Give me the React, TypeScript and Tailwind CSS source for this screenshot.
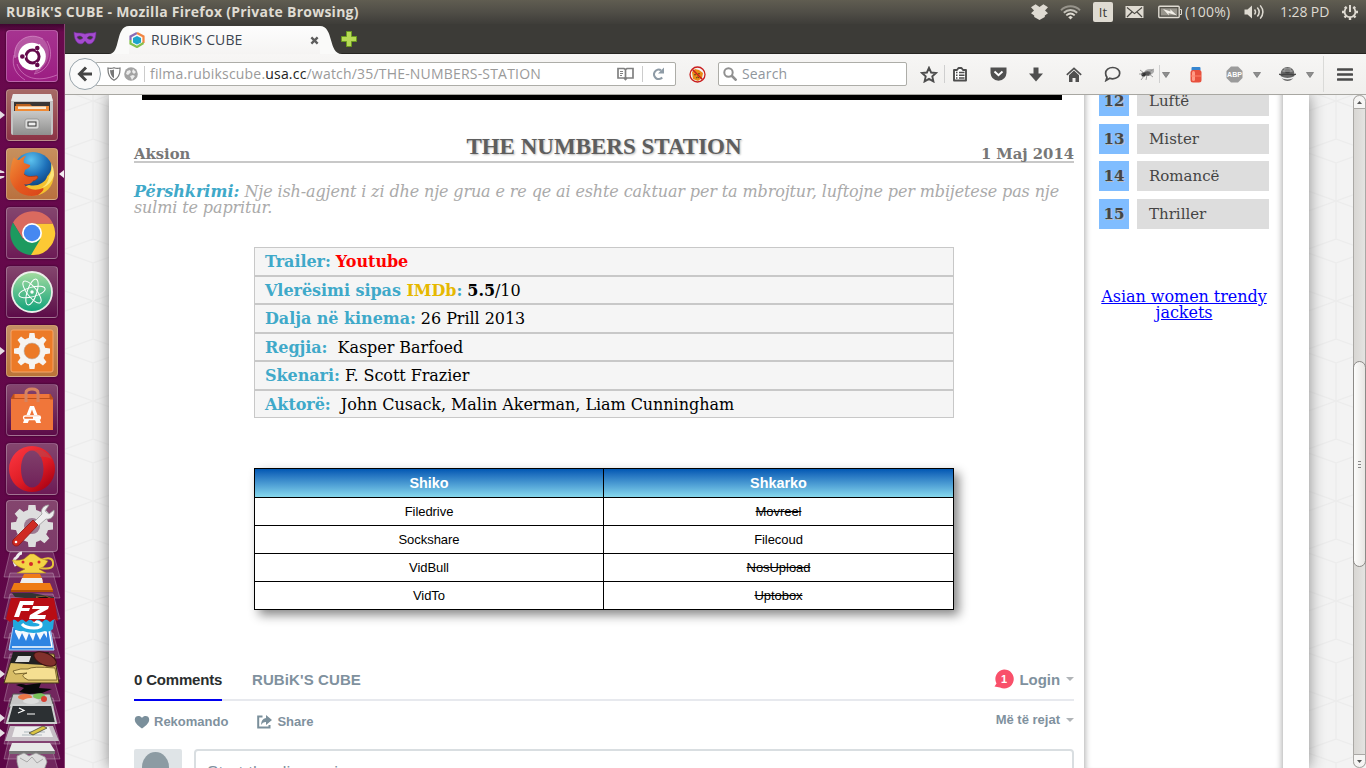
import React from 'react';
import type { ReactNode } from 'react';

const UI = "font-['Open_Sans','Noto_Sans',sans-serif]";

function Slot({ className, children }: { className: string; children: ReactNode }) {
  return <div className={`flex shrink-0 items-center justify-center ${className}`}>{children}</div>;
}

function Caret() {
  return (
    <svg width="8" height="6" viewBox="0 0 8 6">
      <path d="M0.5 0.5h7L4 5.5z" fill="#8f8f8f" stroke="#6f6f6f" strokeWidth="0.7" />
    </svg>
  );
}

/* ---------- Top panel ---------- */

function TopPanel() {
  return (
    <header className={`flex h-6 shrink-0 items-center bg-linear-to-b from-[#605d51] via-[#504e47] to-[#3e3d39] pl-[6px] text-[#dfdbd2] ${UI}`}>
      <span className="w-[400px] text-[14px] leading-6 font-bold whitespace-nowrap tracking-[0.25px]">RUBiK'S CUBE - Mozilla Firefox (Private Browsing)</span>
      <div className="ml-auto flex h-6 items-center">
        <Slot className="w-[20px]">
          <svg width="19" height="18" viewBox="0 0 19 18" fill="#dfdbd2">
            <path d="M5.6 1.2 9.5 4 13.4 1.2 18 4.3 15 7.4 18 10.2 14.8 12.4V14L9.500 17 4.2 14v-1.6L1 10.2 4 7.4 1 4.3z" />
          </svg>
        </Slot>
        <Slot className="ml-[11px] w-[21px]">
          <svg width="21" height="16" viewBox="0 0 21 16" fill="none" strokeWidth="1.9">
            <path d="M1 6.2C6.5 1 14.5 1 20 6.2" stroke="#97948b" />
            <path d="M3.8 8.8c4-3.8 9.4-3.8 13.4 0" stroke="#c4c1b8" />
            <path d="M6.3 11.4c2.6-2.3 5.8-2.3 8.4 0" stroke="#dfdbd2" />
            <path d="M8.2 13.2 10.5 11.8 12.8 13.2 10.5 15.6z" fill="#dfdbd2" stroke="none" />
          </svg>
        </Slot>
        <span className="ml-[12px] flex h-5 w-5 items-center justify-center rounded-[2px] bg-[#dfdbd2] text-[13px] leading-5 text-[#3c3b37]">It</span>
        <Slot className="ml-[12px] w-[19px]">
          <svg width="19" height="14" viewBox="0 0 19 14">
            <rect x="0.5" y="1" width="18" height="12" fill="#dfdbd2" />
            <path d="M2 2.5 9.5 8.6 17 2.5M2 12l5-5M17 12l-5-5" fill="none" stroke="#4a4842" strokeWidth="1.2" />
          </svg>
        </Slot>
        <Slot className="ml-[14px] w-[24px]">
          <svg width="24" height="14" viewBox="0 0 24 14">
            <rect x="0.8" y="1.3" width="20.4" height="11.2" rx="1" fill="none" stroke="#dfdbd2" strokeWidth="1.4" />
            <rect x="2.8" y="3.3" width="16.4" height="7.2" fill="#98958c" />
            <path d="M22 4.5h1.5v5H22" fill="none" stroke="#dfdbd2" />
            <path d="M5 4l7.5 2.5-.3-2.3L19 10.4 10.5 8l.5 2.4z" fill="#f2efe8" />
          </svg>
        </Slot>
        <span className="ml-[3px] w-[48px] text-[14px] leading-6 whitespace-nowrap tracking-[0.25px]">(100%)</span>
        <Slot className="ml-[11px] w-[21px]">
          <svg width="21" height="16" viewBox="0 0 21 16">
            <path d="M0.5 5.500h3l4.500-4v13l-4.500-4h-3z" fill="#dfdbd2" />
            <path d="M10.500 5.600q2 2.400 0 4.800M13.300 3.400q3.800 4.600 0 9.200M16.200 1.400q5.400 6.600 0 13.200" fill="none" stroke="#dfdbd2" strokeWidth="1.5" />
          </svg>
        </Slot>
        <span className="ml-[15px] w-[52px] text-[14px] leading-6 whitespace-nowrap tracking-[-0.1px]">1:28 PD</span>
        <Slot className="mr-[7px] ml-[9px] w-[18px]">
          <svg width="18" height="18" viewBox="0 0 18 18" fill="none" stroke="#dfdbd2">
            <path d="M6 4.300a5.400 5.400 0 1 0 6 0" strokeWidth="1.8" />
            <path d="M9 2v7" strokeWidth="2" />
            <path d="M3.800 3.800 5 5M14.200 3.800 13 5M1 9h2.600M14.400 9H17M3.500 14.500l1.600-1.600M14.500 14.500l-1.600-1.600M9 14.300V17" strokeWidth="2.4" />
          </svg>
        </Slot>
      </div>
    </header>
  );
}

/* ---------- Launcher ---------- */

function Tile({ tint, running, active, children }: { tint: string; running?: boolean; active?: boolean; children: ReactNode }) {
  return (
    <div className="flex h-[52px] w-[64px] shrink-0 items-center">
      <div className="flex w-[6px] flex-col items-start gap-[2px]">
        {running && !active && (
          <svg width="5" height="8" viewBox="0 0 5 8"><path d="M0 0 5 4 0 8z" fill="#e5dde3" /></svg>
        )}
        {active && (
          <svg width="5" height="9" viewBox="0 0 5 9"><path d="M0 0 4 1.500 4.500 3H0zM0 6h4.500L4 7.500 0 9z" fill="#e5dde3" /></svg>
        )}
      </div>
      <div className={`flex h-[52px] w-[52px] items-center justify-center rounded-[4px] border border-white/25 shadow-[0_0_2px_#2a0320] ${tint}`}>{children}</div>
      <div className="flex grow justify-end">
        {active && <svg width="5" height="8" viewBox="0 0 5 8"><path d="M5 0 0 4 5 8z" fill="#f4eef2" /></svg>}
      </div>
    </div>
  );
}

function UbuntuLogo() {
  return (
    <svg width="50" height="50" viewBox="0 0 50 50">
      <g fill="none" stroke="#e9a9dc" strokeWidth="1" opacity="0.5">
        <path d="M8 27C5 10 22 0 36 8M27 43C42 40 48 24 40 10M10 33C15 47 30 52 50 44M7 24c-3 12 3 20 11 25" />
      </g>
      <path d="M8 27C5 10 22 0 36 8 45 16 45 34 27 43 34 30 20 20 8 27z" fill="#fff" opacity="0.2" />
      <circle cx="25" cy="25.500" r="13.800" fill="#fff" />
      <circle cx="25.500" cy="25.500" r="6.600" fill="none" stroke="#64094b" strokeWidth="3" />
      <path d="M12 25.500h7M29 19.500l4-6M29 31.500l4 6" stroke="#fff" strokeWidth="1.800" />
      <g fill="#64094b"><circle cx="15.300" cy="25.500" r="2.300" /><circle cx="30.300" cy="17" r="2.300" /><circle cx="30.300" cy="34" r="2.300" /></g>
    </svg>
  );
}

function FilesIcon() {
  return (
    <svg width="50" height="50" viewBox="0 0 50 50">
      <defs>
        <linearGradient id="cab" x1="0" y1="0" x2="0" y2="1"><stop offset="0" stopColor="#c9c9c8" /><stop offset="1" stopColor="#8f8f8e" /></linearGradient>
      </defs>
      <path d="M6 4h38l2 8v31a2 2 0 0 1-2 2H6a2 2 0 0 1-2-2V12z" fill="#c4c4c4" />
      <path d="M6 4h38l2 7H4z" fill="#e9e9e8" />
      <path d="M7 12h36v11H7z" fill="#3a3634" />
      <path d="M9 14h14l2 2h17v8H9z" fill="#b9601d" />
      <path d="M8 16h34v6H8z" fill="#f08a34" /><path d="M11 16.500h28v2.500H11z" fill="#f6ead6" />
      <path d="M6 21h38v24H6z" fill="url(#cab)" />
      <rect x="18" y="29" width="14" height="10" rx="2" fill="#dcdcdb" stroke="#8b8b8b" strokeWidth="0.700" />
      <rect x="21" y="32" width="8" height="4" fill="#eee" stroke="#333" />
    </svg>
  );
}

function FirefoxIcon() {
  return (
    <svg width="50" height="50" viewBox="0 0 50 50">
      <defs>
        <radialGradient id="fxb" cx="0.450" cy="0.200" r="0.800"><stop offset="0" stopColor="#5cc2ee" /><stop offset="0.500" stopColor="#1d6fb8" /><stop offset="1" stopColor="#0b2f63" /></radialGradient>
        <linearGradient id="fxo" x1="0" y1="0" x2="1" y2="1"><stop offset="0" stopColor="#f0913a" /><stop offset="0.500" stopColor="#e5591f" /><stop offset="1" stopColor="#d8451a" /></linearGradient>
      </defs>
      <circle cx="26" cy="23" r="20" fill="url(#fxb)" />
      <path d="M44 15c5 10 3 22-6 28-8 6-22 4-28-3l12-4c8 2 16-2 18-8-1 0 6-5 4-13z" fill="#f5c12e" />
      <path d="M44 14c2 8-1 13-5 17l3-3c-1 6-4 9-8 11 7-1 12-8 13-13 0-5-1-9-3-12z" fill="#fbe77a" />
      <path d="M7 8c1 2 3 3 5 3 2-2 5-4 7-4-2 2-3 5-2 7l6 2c1 2-3 4-5 5l-1 4c4 4 9 2 13 2 2 1 0 4-4 5-3 4-7 4-9 3 4 6 12 7 19 4 2 1-2 5-5 7-14 4-26-5-28-17C3 22 4 14 7 8z" fill="url(#fxo)" />
      <path d="M17 25c4 4 9 2 13 2 2 1 0 4-4 5" fill="none" stroke="#a9310f" strokeWidth="0.800" />
    </svg>
  );
}

function ChromeIcon() {
  return (
    <svg width="50" height="50" viewBox="0 0 50 50">
      <path d="M25 15.500h20.800A22 22 0 0 1 24 47z" fill="#fcc934" />
      <path d="M6 14.500 16 31l9-15.500h20.800C40 1 16-2 6 14.500z" fill="#da6a5f" />
      <path d="M6 14.500A22 22 0 0 0 24 47l9.500-16H16z" fill="#1d9a5f" />
      <circle cx="25" cy="25" r="10" fill="#fff" /><circle cx="25" cy="25" r="8.300" fill="#4688f1" />
    </svg>
  );
}

function AtomIcon() {
  return (
    <svg width="50" height="50" viewBox="0 0 50 50">
      <defs><linearGradient id="at" x1="0" y1="0" x2="0" y2="1"><stop offset="0" stopColor="#a5dca0" /><stop offset="1" stopColor="#10a27a" /></linearGradient></defs>
      <circle cx="25" cy="25" r="20" fill="url(#at)" stroke="#ecefea" strokeWidth="1.800" />
      <g fill="none" stroke="#fff" strokeWidth="1">
        <ellipse cx="25" cy="25" rx="13.500" ry="4.800" transform="rotate(-15 25 25)" />
        <ellipse cx="25" cy="25" rx="13.500" ry="4.800" transform="rotate(52 25 25)" />
        <ellipse cx="25" cy="25" rx="13.500" ry="4.800" transform="rotate(108 25 25)" />
      </g>
      <circle cx="25" cy="25" r="1.700" fill="#fff" />
    </svg>
  );
}

const TEETH = [0, 45, 90, 135, 180, 225, 270, 315];

function SettingsIcon() {
  return (
    <svg width="50" height="50" viewBox="0 0 50 50">
      <rect x="4" y="4" width="42" height="42" rx="2" fill="#ec7a27" stroke="#f6a568" />
      <g fill="#f6f4f1">
        {TEETH.map((a) => <path key={a} d="M21.500 14 22.500 7h5l1 7z" transform={`rotate(${a} 25 25)`} />)}
        <circle cx="25" cy="25" r="13.500" />
      </g>
      <circle cx="25" cy="25" r="8" fill="#ec7a27" stroke="#b9b0a8" strokeWidth="0.600" />
    </svg>
  );
}

function SoftwareIcon() {
  return (
    <svg width="50" height="50" viewBox="0 0 50 50">
      <path d="M4 14 7 9h36l3 5v31H4z" fill="#f0763a" />
      <path d="M4 14 7 9v5M46 14l-3-5v5zM7 13.500h36" fill="#bd4f1d" stroke="#bd4f1d" />
      <path d="M19 17V8q0-4 6-4t6 4v9" fill="none" stroke="#d68361" strokeWidth="3" />
      <path d="M23 21h4l3.500 9H27l-2-5.500-2 5.500h-3.500zM17 35h5l-1.200 3H16zM28 35h5l1 3h-4.700z" fill="#fff" />
      <rect x="16.500" y="31" width="17" height="3.500" rx="1.700" fill="none" stroke="#fff" strokeWidth="1.300" />
      <path d="M26 32.700h7" stroke="#fff" strokeWidth="2.500" />
    </svg>
  );
}

function OperaIcon() {
  return (
    <svg width="50" height="50" viewBox="0 0 50 50">
      <defs><linearGradient id="op" x1="0" y1="0" x2="0.800" y2="1"><stop offset="0" stopColor="#ff3a44" /><stop offset="0.600" stopColor="#de1c25" /><stop offset="1" stopColor="#a70014" /></linearGradient></defs>
      <path fillRule="evenodd" fill="url(#op)" d="M25 2a23 23 0 1 1 0 46 23 23 0 1 1 0-46zM25 6.500c-6.500 0-11 8-11 18.500s4.500 18.500 11 18.500 11.500-8 11.500-18.500S31.500 6.500 25 6.500z" />
      <path d="M25 6.500c4 0 7-1 11 0 4 2 7 5 9 9-3-2-7-3-12-2.500-2-4-5-6.500-8-6.500z" fill="#b8464f" opacity="0.600" />
    </svg>
  );
}

function ToolsIcon() {
  return (
    <svg width="50" height="50" viewBox="0 0 50 50">
      <g fill="#dedede">
        {TEETH.map((a) => <path key={a} d="M20.500 12 21.500 4h7l1 8z" transform={`rotate(${a} 25 25)`} />)}
        <circle cx="25" cy="25" r="16.500" />
      </g>
      <circle cx="25" cy="25" r="8" fill="#9b7a92" />
      <path d="M26 22 35 13c-2-5 2-9 7-9l-4 6 4 3 5-4c1 6-3 10-8 9l-9 8z" fill="#eee" stroke="#999" strokeWidth="0.800" />
      <path d="M26 19l5 5L12 44c-4 3-8-1-6-5z" fill="#cf2a22" stroke="#8e1713" strokeWidth="0.800" /><circle cx="9" cy="41" r="1.300" fill="#fff" />
    </svg>
  );
}

function FoldedStack() {
  return (
    <svg width="64" height="217" viewBox="0 551 64 217" className="shrink-0">
      <g fill="#fff" fillOpacity="0.13" stroke="#fff" strokeOpacity="0.25">
        {[552, 573, 594, 613, 633, 654, 676, 698, 719, 734, 752].map((y) => <path key={y} d={`M10 ${y}h43l7 25H4z`} />)}
      </g>
      <g>
        <path d="M16 566q-4-6 1-9 2-4 5-4" fill="none" stroke="#eee" strokeWidth="3" />
        <path d="M41 560q13-5 12 5-1 5-13 3" fill="none" stroke="#e7c63b" strokeWidth="2" />
        <path d="M12 560q8 1 12-1l6-5h4l6 4 8 3q-4 7-9 8l7 4H17l8-4q-9-2-13-9z" fill="#f3d445" stroke="#a98313" strokeWidth="0.500" />
        <circle cx="23" cy="562" r="1.500" fill="#d52b2b" /><circle cx="31" cy="564" r="2" fill="#d52b2b" /><circle cx="39" cy="562" r="1.500" fill="#d52b2b" />
      </g>
      <path d="M24 574h16l3 7H21z" fill="#ef7b19" /><path d="M22 578h20l1 5H20z" fill="#eee" /><path d="M14 583h36l3 7H11z" fill="#ee7b14" /><path d="M11 590h42v2H11z" fill="#ae4c05" />
      <path d="M12 593h20l22 4v4L15 597z" fill="#333" /><path d="M36 597l10-1 8 4-8 2z" fill="#111" stroke="#c68a3a" strokeWidth="0.600" />
      <path d="M13 627 50 627 54 650H9z" fill="#2e84e2" stroke="#a4cffa" />
      <path d="M15 630v2l4 8 3-7 4 8 3-8 4 8 3-9 4 8 4-7 3 5v-8z" fill="#fff" opacity="0.950" /><path d="M12 647h40l-3-17" fill="none" stroke="#fff" strokeWidth="1.500" />
      <path d="M13 620h41l-1 9q-4 4-8 2-12 4-22 0-8 1-10-5z" fill="#22a8de" /><path d="M22 624q3 4 12 4 8 0 7-4-1-2-8-3" fill="none" stroke="#fff" strokeWidth="3" />
      <path d="M11 598h43l4 23-4-2-4 3-4-3-4 3-4-3-4 3-4-3-4 3-4-3-4 3-4-3-4 3-4-3z" fill="#b80d14" />
      <path d="M20 601h14l-1 4H23l-1 3h8l-1 3h-8l-2 6h-5zM33 606h16l-1 3-11 6h9l-1 4H29l1-4 10-6h-8z" fill="#fff" />
      <path d="M12 658 20 654h34l5 29H4z" fill="#d8bd66" stroke="#463818" strokeWidth="1" /><path d="M13 671q8-3 15-2 4-3 27-1l2 12H28q-10-5-1-7l-12 1z" fill="#f5df91" stroke="#63501d" strokeWidth="0.800" />
      <path d="M13 652h36l-5 13-34-2z" fill="#212121" /><path d="M18 656h13l-2 6H15z" fill="#ddd" /><ellipse cx="45" cy="659" rx="12" ry="6" transform="rotate(24 45 659)" fill="#81302c" stroke="#3c1311" />
      <path d="M13 694 50 694 54 707H9z" fill="#c6c6c6" stroke="#555" /><ellipse cx="25" cy="697" rx="7" ry="3" fill="#e87747" /><ellipse cx="39" cy="696" rx="6" ry="3" fill="#79c45b" /><ellipse cx="31" cy="701" rx="8" ry="3" fill="#ddd" /><circle cx="44" cy="699" r="3" fill="#d84334" />
      <path d="M16 685q5-2 10 0l15-2-2 5 13 1-10 4-13 1-10-2q3-2 5-4z" fill="#08090a" />
      <path d="M12 705 52 705 56 723H7z" fill="#2c3033" stroke="#ced0d0" strokeWidth="2" /><path d="M19 708 24 710.500 18 713M27 714h8" fill="none" stroke="#fff" strokeWidth="1.200" />
      <path d="M10 726 53 726 59 741H5z" fill="#c5bdc4" /><path d="M15 727h34l4 10H12z" fill="#eee" /><path d="M24 732h21M22 735h20" stroke="#adb8bd" /><path d="M29 733 43 726l4 2-14 7z" fill="#d9c443" stroke="#333" strokeWidth="0.700" />
      <path d="M12 743 50 743 55 751H9z" fill="#e8e8e8" /><path d="M9 751h46v3H9z" fill="#777" />
      <path d="M17 756l7-3 5 3 7-3 9 4 2 5-3 8H19l-2-8z" fill="#dedede" stroke="#999" strokeWidth="0.800" /><path d="M20 758l7 4 5-5 5 6 6-4" fill="none" stroke="#aaa" />
      <g fill="#e6dfe4"><path d="M0 670l5 4-5 4zM0 714l5 4-5 4zM0 729l5 4-5 4z" /></g>
    </svg>
  );
}

function Launcher() {
  return (
    <aside className="flex w-[65px] shrink-0 flex-col gap-[7px] overflow-hidden border-r border-[#8a4474] bg-linear-to-b from-[#3f0530] from-0% via-[#69094d] via-[8px] to-[#5c0646] pt-[6px]">
      <Tile tint="bg-linear-to-b from-[#a63390] to-[#9c1d82]"><UbuntuLogo /></Tile>
      <Tile tint="bg-linear-to-b from-[#a66a65] to-[#8b3346]" running><FilesIcon /></Tile>
      <Tile tint="bg-linear-to-b from-[#c7905d] to-[#b9713f]" running active><FirefoxIcon /></Tile>
      <Tile tint="bg-linear-to-b from-[#84456e] to-[#6d1a56]"><ChromeIcon /></Tile>
      <Tile tint="bg-linear-to-b from-[#84456e] to-[#5d0b49]"><AtomIcon /></Tile>
      <Tile tint="bg-linear-to-b from-[#c58f65] to-[#bb7438]" running><SettingsIcon /></Tile>
      <Tile tint="bg-linear-to-b from-[#84456e] to-[#5d0b49]"><SoftwareIcon /></Tile>
      <Tile tint="bg-linear-to-b from-[#84456e] to-[#6d1a56]"><OperaIcon /></Tile>
      <div className="-mt-[2px] flex flex-col">
        <Tile tint="bg-linear-to-b from-[#84456e] to-[#7d3a69]"><ToolsIcon /></Tile>
        <div className="-mt-[1px] flex"><FoldedStack /></div>
      </div>
    </aside>
  );
}

/* ---------- Browser chrome ---------- */

function TabStrip() {
  return (
    <div className={`flex h-[30px] shrink-0 items-end border-b border-[#262522] bg-[#3c3b37] ${UI}`}>
      <Slot className="h-[30px] w-[40px]">
        <svg width="24" height="14" viewBox="0 0 24 14">
          <path fillRule="evenodd" fill="#a54bd0" stroke="#6f2a96" strokeWidth="0.600" d="M1 1c4 2 7 0 11 2 4-2 7 0 11-2 0 6-2 12-7 12-2 0-3-2-4-3-1 1-2 3-4 3C3 13 1 7 1 1zM4 6c1 3 4 3 6 1C8 4.500 6 4.500 4 6zm16 0c-2-1.500-4-1.500-6 1 2 2 5 2 6-1z" />
        </svg>
      </Slot>
      <div className="-mb-px flex h-[28px] items-end">
        <svg width="24" height="28" viewBox="0 0 24 28"><path d="M4 28C16 28 10 0 24 0V28z" fill="#fafaf9" /></svg>
        <div className="flex h-[28px] w-[191px] items-center bg-linear-to-b from-[#fdfdfd] to-[#f5f4f3]">
          <svg width="16" height="16" viewBox="0 0 16 16" fill="none" strokeWidth="2.200">
            <path d="M1.500 8V4.500L8 1" stroke="#8a6bb5" /><path d="M8 1l6.500 3.500V11" stroke="#f18542" /><path d="M1.500 8v3.500L8 15l6.500-4" stroke="#84c14c" />
            <path d="M8 4l4 2v4.500L8 12.500 4 10.500V6z" fill="#1ea6cb" />
          </svg>
          <span className="ml-[6px] w-[159px] text-[14px] leading-7 whitespace-nowrap tracking-[0.1px] text-[#3c4550]">RUBiK'S CUBE</span>
          <svg width="9" height="9" viewBox="0 0 10 10" className="shrink-0"><path d="M1.500 1.500l7 7M8.500 1.500l-7 7" stroke="#5d5d5d" strokeWidth="2.600" /></svg>
        </div>
        <svg width="24" height="28" viewBox="0 0 24 28"><path d="M22 28C8 28 14 0 0 0V28z" fill="#fafaf9" /></svg>
      </div>
      <Slot className="-ml-[7px] h-[29px] w-[24px]">
        <svg width="16" height="16" viewBox="0 0 16 16"><path d="M5.500 0.500h5v5h5v5h-5v5h-5v-5h-5v-5h5z" fill="#b6d955" stroke="#6b9a1f" /></svg>
      </Slot>
    </div>
  );
}

function Toolbar() {
  return (
    <div className={`flex h-[41px] shrink-0 items-center border-b border-[#a8a7a2] bg-linear-to-b from-[#f7f6f5] to-[#f0efed] ${UI}`}>
      <div className="z-10 ml-[4px] flex h-8 w-8 shrink-0 items-center justify-center rounded-full border border-[#98a4ab] bg-[#fafafa]">
        <svg width="16" height="16" viewBox="0 0 16 16" fill="none" stroke="#444" strokeWidth="3"><path d="M15 8H3M9 1.500 2.500 8 9 14.500" /></svg>
      </div>
      <div className="-ml-[6px] flex h-6 w-[581px] shrink-0 items-center rounded-[2px] border border-[#adada8] bg-white pl-[11px] text-[#9a9a9a]">
        <svg width="14" height="14" viewBox="0 0 14 14"><path d="M1 1q3 1 6-.3Q10 2 13 1q.5 9-6 12.300Q.5 10 1 1z" fill="#fff" stroke="#777" strokeWidth="1.200" /><path d="M7 2.500Q5 3.500 3 3q.3 6 4 8.300z" fill="#777" /></svg>
        <svg width="14" height="14" viewBox="0 0 14 14" className="ml-[3px]"><circle cx="7" cy="7" r="6.800" fill="#a3a3a3" /><path d="M3 4l3-1 1 2-3 3-2-1zM9 2l3 3-2 2-2-2zM6 9l3-1 2 1-3 4z" fill="#ececec" /></svg>
        <span className="ml-[6px] h-4 w-px bg-[#ccc]" />
        <span className="ml-[5px] w-[463px] text-[14px] leading-[22px] whitespace-nowrap tracking-[0.19px]">
          filma.rubikscube.<span className="text-[#222]">usa.cc</span>/watch/35/THE-NUMBERS-STATION
        </span>
        <svg width="17" height="14" viewBox="0 0 17 14" fill="none" stroke="#808080" className="ml-[4px] shrink-0"><path d="M1 1.500h6l1.500 1 1.500-1h6v9.500h-6l-1.500 1.500L7 11H1zM8.500 3v9" strokeWidth="1.700" /><path d="M3 4.500h3M3 6.500h3M3 8.500h2" /></svg>
        <span className="ml-[8px] h-4 w-px bg-[#ccc]" />
        <svg width="13" height="14" viewBox="0 0 13 14" className="ml-[9px] shrink-0"><path d="M10.200 10.500A4.700 4.700 0 1 1 9 3.200" fill="none" stroke="#8e9ba6" strokeWidth="2.200" /><path d="M12 .5v6H6z" fill="#8e9ba6" /></svg>
      </div>
      <Slot className="w-[42px]">
        <svg width="17" height="17" viewBox="0 0 17 17"><path d="M3 6 6 3l4 1 4 3-1 5-4 3-5-2z" fill="#e98a18" /><path d="M5 9q1-1 2 0M9 8q1-1 2 0M7 12q2-2 3 0" stroke="#5b4a14" fill="none" /><circle cx="8.500" cy="8.500" r="7.500" fill="none" stroke="#c91e1e" strokeWidth="1.300" /><path d="M3.500 3.500l10 10" stroke="#c91e1e" strokeWidth="1.500" /></svg>
      </Slot>
      <div className="flex h-6 w-[189px] shrink-0 items-center rounded-[2px] border border-[#adada8] bg-white pl-1">
        <svg width="14" height="14" viewBox="0 0 14 14" fill="none" stroke="#909090" strokeWidth="2"><circle cx="5.500" cy="5.500" r="4.200" /><path d="M8.500 8.500l5 5" strokeWidth="2.600" /></svg>
        <span className="ml-[5px] text-[14px] leading-[22px] tracking-[0.15px] text-[#8f969c]">Search</span>
      </div>
      <Slot className="ml-2 w-7">
        <svg width="18" height="17" viewBox="0 0 18 17"><path d="M9 1.800l2.100 4.700 5 .5-3.800 3.400 1.100 5L9 12.900l-4.400 2.500 1.100-5L1.900 7l5-.5z" fill="none" stroke="#4d4d4d" strokeWidth="1.900" /></svg>
      </Slot>
      <span className="ml-px h-[18px] w-px bg-[#cfcfcf]" />
      <Slot className="ml-px w-7">
        <svg width="16" height="16" viewBox="0 0 16 16"><path d="M2 4h3l1.500-2h3L11 4h3v10.500H2z" fill="#fff" stroke="#4d4d4d" strokeWidth="1.900" strokeLinejoin="round" /><path d="M4 6.500h1.500M7 6.500h5.500M4 9.200h1.500M7 9.200h5.500M4 12h1.500M7 12h5.500" stroke="#4d4d4d" strokeWidth="1.400" /></svg>
      </Slot>
      <Slot className="ml-[5px] w-[38px]">
        <svg width="17" height="16" viewBox="0 0 17 16"><path d="M.5 1.500h16V7q-.5 7-8 7.700Q1 14 .5 7z" fill="#505050" /><path d="M4.500 5.500l4 3.700 4-3.700" fill="none" stroke="#fff" strokeWidth="1.900" /></svg>
      </Slot>
      <Slot className="w-[38px]"><svg width="14" height="15" viewBox="0 0 14 15"><path d="M4.500 .5h5v6h4.500L7 14.500 0 6.500h4.500z" fill="#4f4f4f" /></svg></Slot>
      <Slot className="w-[38px]"><svg width="16" height="15" viewBox="0 0 16 15"><path d="M8 3.500l5 4.700V15H9.500v-4h-3v4H3V8.200z" fill="#505050" /><path d="M.8 7.800 8 1.300l7.200 6.500" fill="none" stroke="#505050" strokeWidth="1.600" /></svg></Slot>
      <Slot className="w-[38px]"><svg width="17" height="16" viewBox="0 0 17 16"><path d="M8.700 1.500c4 0 7 2.500 7 5.700s-3 5.600-7 5.600c-1 0-2-.1-2.900-.5L2 14.500l1-3.300C2 10 1.600 8.800 1.600 7.200c0-3.200 3.100-5.700 7.100-5.700z" fill="none" stroke="#4d4d4d" strokeWidth="1.700" /></svg></Slot>
      <Slot className="ml-1 w-6">
        <svg width="16" height="13" viewBox="0 0 16 13"><ellipse cx="10" cy="4.500" rx="5.500" ry="3" fill="#aaa" transform="rotate(-18 9 5)" /><ellipse cx="8.500" cy="5.500" rx="3.200" ry="2.300" fill="#555" /><circle cx="4.500" cy="6.500" r="2.200" fill="#333" /><path d="M1 2l4 3M0 6h4M2 12l3-4M7 12l1-5M14 9l-4-3M15 1l-5 3" stroke="#888" strokeWidth="0.800" /></svg>
      </Slot>
      <span className="h-[18px] w-px bg-[#cfcfcf]" />
      <Slot className="w-3 pt-[2px]"><Caret /></Slot>
      <Slot className="ml-2 w-8"><svg width="12" height="17" viewBox="0 0 12 17"><rect x="1.500" y="1" width="9" height="4" rx="1" fill="#3585d0" /><rect x=".5" y="4" width="11" height="12.500" rx="2.500" fill="#e8503d" /><rect x="2" y="5" width="3" height="10" rx="1.500" fill="#ff9b87" /><path d="M1 10h10" stroke="#ff8068" /></svg></Slot>
      <div className="ml-[6px] flex w-8 shrink-0 justify-center">
        <svg width="17" height="17" viewBox="0 0 17 17"><path d="M5 .5h7l4.500 4.500v7L12 16.500H5L.5 12V5z" fill="#9b9b9b" /><text x="8.500" y="11.200" textAnchor="middle" fontSize="7" fontWeight="bold" fill="#fff" fontFamily="Liberation Sans, sans-serif">ABP</text></svg>
      </div>
      <Slot className="w-[14px] pt-[2px]"><Caret /></Slot>
      <Slot className="ml-[7px] w-8"><svg width="17" height="16" viewBox="0 0 17 16"><circle cx="8.500" cy="8" r="7" fill="#666" /><circle cx="8.500" cy="5" r="2.500" fill="#444" /><path d="M3.500 5h10M5 3h7" stroke="#ccc" strokeWidth="0.900" /><path d="M1.500 11q7 3.500 14 0" stroke="#eee" strokeWidth="1.400" fill="none" /><path d="M0 8q2 1.500 4.500.3h8Q15 9.500 17 8" stroke="#444" strokeWidth="1.300" fill="none" /></svg></Slot>
      <Slot className="w-[14px] pt-[2px]"><Caret /></Slot>
      <span className="ml-[6px] h-9 w-px bg-[#dadad8]" />
      <Slot className="w-[42px]"><svg width="16" height="13" viewBox="0 0 16 13"><path d="M1 1.500h14M1 6.500h14M1 11.500h14" stroke="#4a4a4a" strokeWidth="2.700" strokeLinecap="round" /></svg></Slot>
    </div>
  );
}

/* ---------- Page ---------- */

function CubeBackdrop({ id, origin }: { id: string; origin: number }) {
  return (
    <svg width="44" height="673" className="block shrink-0">
      <defs>
        <pattern id={id} width="66" height="100" patternUnits="userSpaceOnUse" x={origin} y="6">
          <rect width="66" height="100" fill="#f3f3f3" />
          <path d="M33 0V38L0 50 33 62V100M33 38 66 50 33 62M33 0 0-12M33 0 66-12M33 100 0 88M33 100 66 88M33 0 0 12M33 0 66 12M33 100 0 112M33 100 66 112M0 12V88M66 12V88" fill="none" stroke="#ececec" strokeWidth="1.200" />
        </pattern>
      </defs>
      <rect width="44" height="673" fill={`url(#${id})`} />
    </svg>
  );
}

function Label({ children }: { children: ReactNode }) {
  return <b className="text-[#3fa9c9]">{children}</b>;
}

const FACTS: ReactNode[] = [
  <><Label>Trailer:</Label> <b className="text-[#f00]">Youtube</b></>,
  <><Label>Vlerësimi sipas <span className="text-[#e6b800]">IMDb</span>:</Label> <b>5.5</b>/10</>,
  <><Label>Dalja në kinema:</Label> 26 Prill 2013</>,
  <><Label>Regjia:</Label>&nbsp; Kasper Barfoed</>,
  <><Label>Skenari:</Label> F. Scott Frazier</>,
  <><Label>Aktorë:</Label>&nbsp; John Cusack, Malin Akerman, Liam Cunningham</>,
];

const MIRRORS = [
  ['Filedrive', 'Movreel', true],
  ['Sockshare', 'Filecoud', false],
  ['VidBull', 'NosUpload', true],
  ['VidTo', 'Uptobox', true],
] as const;

const GENRES = [['12', 'Luftë'], ['13', 'Mister'], ['14', 'Romancë'], ['15', 'Thriller']];

function Article() {
  return (
    <main className="flex w-[975px] shrink-0 flex-col pr-[10px] pl-[25px]">
      <div className="mr-3 ml-2 h-[5px] shrink-0 bg-black" />
      <div className="mt-[26px] flex h-[37px] shrink-0 items-end justify-between border-b-2 border-[#c8c8c8] text-[14.8px] leading-[14px] font-bold text-[#777]">
        <span className="w-[120px]">Aksion</span>
        <h1 className="font-['Liberation_Serif',serif] text-[23px] leading-[28px] font-bold text-[#5e5e5e] [text-shadow:1px_1px_2px_#bbb]">THE NUMBERS STATION</h1>
        <span className="w-[120px] text-right whitespace-nowrap">1 Maj 2014</span>
      </div>
      <p className="mt-[21px] h-8 shrink-0 text-[16px] leading-4 text-[#aaa] italic"><Label>Përshkrimi:</Label> <span className="tracking-[-0.125px]">Nje ish-agjent i zi dhe nje grua e re qe ai eshte caktuar per ta mbrojtur, luftojne per mbijetese pas nje sulmi te papritur.</span></p>
      <div className="mt-[31px] ml-[120px] w-[700px] shrink-0">
        {FACTS.map((fact, i) => (
          <div key={i} className="h-[28.5px] border border-[#c8c8c8] bg-[#f5f5f5] pl-[10px] text-[16px] leading-[27px] tracking-[-0.05px] whitespace-nowrap text-black">{fact}</div>
        ))}
      </div>
      <div className="mt-[50px] ml-[120px] flex w-[700px] shrink-0 flex-col gap-px border border-black bg-black text-center font-['Liberation_Sans',Arial,sans-serif] text-[13px] text-black shadow-[5px_5px_10px_#888]">
        <div className="grid h-[28px] grid-cols-[348px_349px] gap-px text-[14.4px] leading-[28px] font-bold text-white [&>div]:bg-linear-to-b [&>div]:from-[#0057b3] [&>div]:to-[#86d8ec]">
          <div>Shiko</div>
          <div>Shkarko</div>
        </div>
        {MIRRORS.map(([watch, download, dead]) => (
          <div key={watch} className="grid h-[27px] grid-cols-[348px_349px] gap-px leading-[27px] tracking-[-0.05px]">
            <div className="bg-white">{watch}</div>
            <div className={dead ? 'bg-white line-through' : 'bg-white'}>{download}</div>
          </div>
        ))}
      </div>
      <Comments />
    </main>
  );
}

function Comments() {
  return (
    <section className="mt-[49px] shrink-0 font-['Liberation_Sans',Arial,sans-serif] text-[#7f919e]">
      <div className="flex h-[42px] border-b-2 border-[#e7e9ee] text-[15px] leading-[42px] font-bold">
        <span className="h-[42px] w-[88px] border-b-2 border-[#0000f0] tracking-[-0.18px] whitespace-nowrap text-[#2a2e2e]">0 Comments</span>
        <span className="ml-[30px] tracking-[0.1px]">RUBiK'S CUBE</span>
        <div className="ml-auto flex items-center">
          <svg width="20" height="20" viewBox="0 0 20 20">
            <path d="M10 .5a9.500 9.500 0 1 1-4 18L.5 17.500l2-3A9.500 9.500 0 0 1 10 .5z" fill="#f9506a" />
            <text x="10" y="13.700" textAnchor="middle" fontSize="11" fontWeight="bold" fill="#fff">1</text>
          </svg>
          <span className="ml-[5px] pt-px tracking-[-0.05px]">Login</span>
          <svg width="8" height="4" viewBox="0 0 8 4" className="ml-[6px]"><path d="M0 0h8L4 4z" fill="#b0b4b7" /></svg>
        </div>
      </div>
      <div className="flex h-[48px] items-start pt-[11px] text-[13px] leading-[20px] font-bold">
        <svg width="16" height="14" viewBox="0 0 16 14" className="mt-[3px]"><path d="M8 13.500C3 10 .8 7.500.8 4.500.8.500 6 0 8 3c2-3 7.200-2.500 7.200 1.500 0 3-2.200 5.500-7.200 9z" fill="#7a8f9b" /></svg>
        <span className="ml-1">Rekomando</span>
        <svg width="15" height="14" viewBox="0 0 15 14" className="mt-[3px] ml-[29px]"><path d="M5.500 1.500H1.200v11h11.300V10" fill="none" stroke="#7a8f9b" strokeWidth="2" /><path d="M9 0l6 5-6 5V7Q6 6.500 4 10q0-6 5-7z" fill="#7a8f9b" /></svg>
        <span className="ml-[5px]">Share</span>
        <div className="-mt-[2px] ml-auto flex items-center">
          <span>Më të rejat</span>
          <svg width="8" height="4" viewBox="0 0 8 4" className="ml-[6px]"><path d="M0 0h8L4 4z" fill="#b0b4b7" /></svg>
        </div>
      </div>
      <div className="flex gap-3">
        <svg width="48" height="48" viewBox="0 0 48 48"><rect width="48" height="48" rx="2" fill="#dfe4e7" /><ellipse cx="21.500" cy="18" rx="13.500" ry="15" fill="#8c9ba3" /></svg>
        <div className="h-[60px] grow rounded-[4px] border-2 border-[#d9dee1] px-[11px] pt-[12px] text-[17px] leading-[20px] tracking-[0.1px] text-[#7f919e]">Start the discussion…</div>
      </div>
    </section>
  );
}

function Sidebar() {
  return (
    <aside className="h-full w-[199px] shrink-0 overflow-hidden pr-[14px] pl-[15px] shadow-[inset_7px_0_6px_-6px_#aaa,inset_-7px_0_6px_-6px_#aaa]">
      <ul className="-mt-[9px]">
        {GENRES.map(([n, name]) => (
          <li key={n} className="flex h-[37.5px] gap-2 text-[15px] leading-[30px] text-[#444]">
            <span className="h-[30px] w-[30px] bg-[#80bdff] text-center leading-[31px] font-bold [text-shadow:1px_1px_0_#bbb]">{n}</span>
            <span className="h-[30px] w-[132px] bg-[#ddd] pl-3">{name}</span>
          </li>
        ))}
      </ul>
      <p className="mt-[53px] text-center text-[16px] leading-4 tracking-[-0.05px] text-[#00f] underline">Asian women trendy jackets</p>
    </aside>
  );
}

function Scrollbar() {
  return (
    <div className="flex h-[673px] w-[13px] shrink-0 flex-col rounded-[7px] border-x border-[#aaa8a5] bg-linear-to-r from-[#d8d6d3] to-[#e4e3e1]">
      <div className="-mx-px flex h-[14px] items-center justify-center rounded-t-[7px] border border-[#aaa8a5] bg-[#f6f5f4]"><svg width="5" height="3" viewBox="0 0 5 3"><path d="M0 3h5L2.500 0z" fill="#555" /></svg></div>
      <div className="-mx-px mt-[252px] flex h-[206px] flex-col items-center justify-center gap-[2px] rounded-[7px] border border-[#8c8a87] bg-linear-to-r from-[#fcfcfb] to-[#e8e6e3]">
        <span className="h-px w-[3px] bg-[#888]" /><span className="h-px w-[3px] bg-[#888]" /><span className="h-px w-[3px] bg-[#888]" />
      </div>
      <div className="-mx-px mt-auto flex h-[14px] items-center justify-center rounded-b-[7px] border border-[#aaa8a5] bg-[#f6f5f4]"><svg width="5" height="3" viewBox="0 0 5 3"><path d="M0 0h5L2.500 3z" fill="#555" /></svg></div>
    </div>
  );
}

export default function App() {
  return (
    <div className="flex h-[768px] w-[1366px] flex-col overflow-hidden">
      <TopPanel />
      <div className="flex h-[744px]">
        <Launcher />
        <div className="flex w-[1301px] flex-col">
          <TabStrip />
          <Toolbar />
          <div className="flex h-[673px] overflow-hidden bg-[#f3f3f3] font-['DejaVu_Serif',serif]">
            <CubeBackdrop id="cubes-left" origin={-5} />
            <div className="relative flex h-[673px] w-[1200px] shrink-0 bg-white shadow-[0_0_15px_#888]">
              <Article />
              <Sidebar />
            </div>
            <CubeBackdrop id="cubes-right" origin={-6} />
            <div className="relative flex"><Scrollbar /></div>
          </div>
        </div>
      </div>
    </div>
  );
}
